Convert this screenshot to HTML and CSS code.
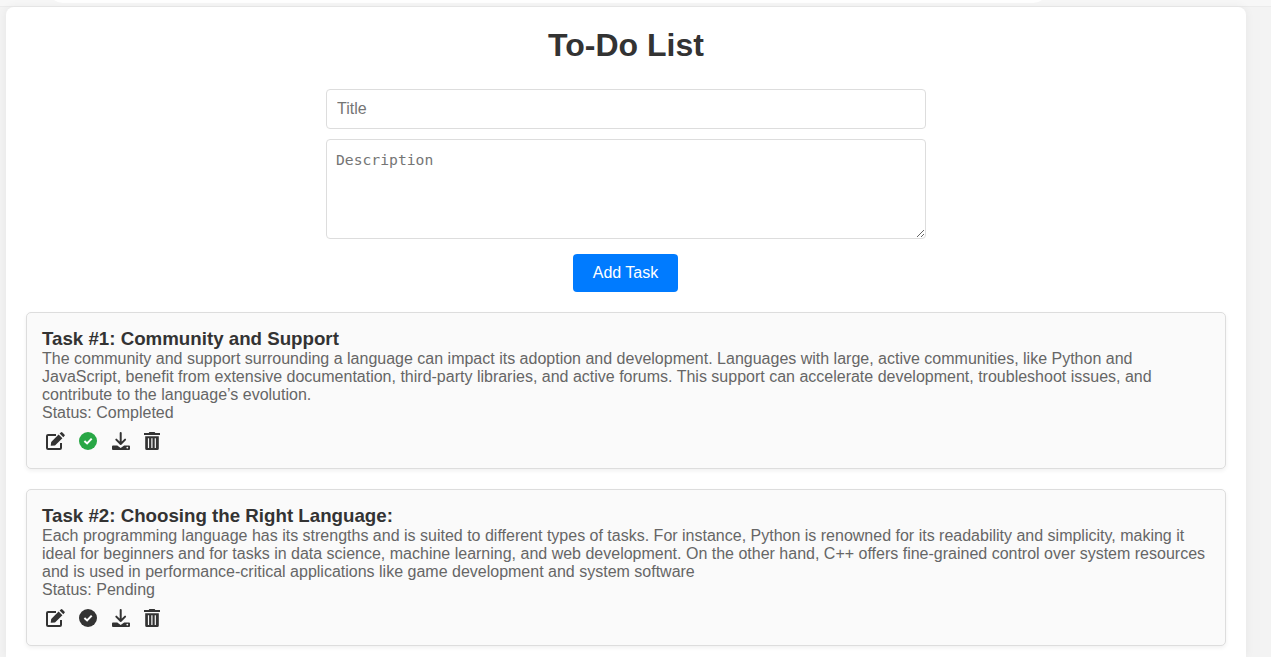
FILE: index.html
```
<!DOCTYPE html>
<html lang="en">
<head>
<meta charset="utf-8">
<title>To-Do List</title>
<link rel="stylesheet" href="styles.css">
</head>
<body>
<svg class="sprite" aria-hidden="true">
  <symbol id="edit" viewBox="0 0 19 18">
    <path d="M10 3H2.1Q1 3 1 4.1V15.9Q1 17 2.1 17H13.9Q15 17 15 15.9V11" fill="none" stroke="currentColor" stroke-width="2"/>
    <path d="M4.7 13.8 5.2 9.9 12.6 2.5 16.4 6.3 9 13.4ZM13.6 1.6 14.8.4Q15.6-.3 16.4.4L18.4 2.4Q19.2 3.2 18.4 4L17.3 5.2Z" fill="currentColor"/>
  </symbol>
  <symbol id="check" viewBox="0 0 18 18">
    <circle cx="9" cy="9" r="9" fill="currentColor"/>
    <path d="M5.4 8.9 8.1 11.4 12.7 6.6" fill="none" stroke="#fff" stroke-width="2"/>
  </symbol>
  <symbol id="download" viewBox="0 0 18 18">
    <path d="M8.7 1V12M4.3 7.6 8.7 12 13.1 7.6" fill="none" stroke="currentColor" stroke-width="2" stroke-linecap="round" stroke-linejoin="round"/>
    <path d="M1 13.5H5.3L8.7 16 12.1 13.5H17Q18 13.5 18 14.5V17Q18 18 17 18H1Q0 18 0 17V14.5Q0 13.5 1 13.5Z" fill="currentColor"/>
    <circle cx="15.3" cy="15.6" r=".9" fill="#fafafa"/>
  </symbol>
  <symbol id="trash" viewBox="0 0 16 18">
    <path d="M0 1H4.7L5.4 0H10.6L11.3 1H16V2.9H0ZM1.2 4.2H14.8V16.5Q14.8 18 13.3 18H2.7Q1.2 18 1.2 16.5Z" fill="currentColor"/>
    <path d="M4.5 6.2V16M7.9 6.2V16M11.3 6.2V16" stroke="#fafafa" stroke-width="1.2"/>
  </symbol>
</svg>
<div class="topbar"><div class="topbar-field"></div></div>
<main class="container">
  <h1>To-Do List</h1>
  <form class="task-form">
    <input class="field" type="text" placeholder="Title">
    <textarea class="field field-area" placeholder="Description"></textarea>
    <button class="add" type="button">Add Task</button>
  </form>
  <section class="tasks">
    <article class="task">
      <h3>Task #1: Community and Support</h3>
      <p>The community and support surrounding a language can impact its adoption and development. Languages with large, active communities, like Python and JavaScript, benefit from extensive documentation, third-party libraries, and active forums. This support can accelerate development, troubleshoot issues, and contribute to the language’s evolution.</p>
      <p>Status: Completed</p>
      <div class="actions">
        <svg class="icon icon-edit"><use href="#edit"/></svg>
        <svg class="icon icon-check done"><use href="#check"/></svg>
        <svg class="icon"><use href="#download"/></svg>
        <svg class="icon icon-trash"><use href="#trash"/></svg>
      </div>
    </article>
    <article class="task">
      <h3>Task #2: Choosing the Right Language:</h3>
      <p>Each programming language has its strengths and is suited to different types of tasks. For instance, Python is renowned for its readability and simplicity, making it ideal for beginners and for tasks in data science, machine learning, and web development. On the other hand, C++ offers fine-grained control over system resources and is used in performance-critical applications like game development and system software</p>
      <p>Status: Pending</p>
      <div class="actions">
        <svg class="icon icon-edit"><use href="#edit"/></svg>
        <svg class="icon icon-check"><use href="#check"/></svg>
        <svg class="icon"><use href="#download"/></svg>
        <svg class="icon icon-trash"><use href="#trash"/></svg>
      </div>
    </article>
  </section>
</main>
</body>
</html>
```
FILE: styles.css
```
* { box-sizing: border-box; margin: 0; }
html, body { height: 100%; overflow: hidden; }
body {
  background: #f3f3f3;
  color: #333;
  font-family: "Liberation Sans", Arial, sans-serif;
  font-size: 16px;
}
.sprite { display: none; }
.topbar {
  height: 7px;
  background: #f7f7f7;
  border-bottom: 1px solid #ebebeb;
  overflow: hidden;
}
.topbar-field {
  width: 1000px;
  height: 30px;
  margin: -27px 0 0 48px;
  border-radius: 15px;
  background: #fff;
}
.container {
  width: 1240px;
  height: 650px;
  margin-left: 6px;
  padding: 20px 20px 0;
  border-radius: 8px 8px 0 0;
  background: #fff;
  box-shadow: 0 0 10px rgba(0, 0, 0, .06);
}
h1 {
  font-size: 32px;
  line-height: 36px;
  text-align: center;
}
.task-form {
  display: flex;
  flex-direction: column;
  align-items: center;
  margin-top: 26px;
}
.field {
  width: 600px;
  height: 40px;
  padding: 10px;
  border: 1px solid #ddd;
  border-radius: 4px;
  background: #fff;
  font: 16px "Liberation Sans", Arial, sans-serif;
}
.field::placeholder { color: #757575; }
.field-area {
  height: 100px;
  margin-top: 10px;
  padding: 11px 9px;
  font: 14.7px/18px "DejaVu Sans Mono", monospace;
  resize: vertical;
}
.add {
  width: 105px;
  height: 38px;
  margin: 15px 1px 0 0;
  padding: 0;
  border: 0;
  border-radius: 4px;
  background: #007bff;
  color: #fff;
  font: 16px "Liberation Sans", Arial, sans-serif;
}
.tasks {
  display: flex;
  flex-direction: column;
  gap: 20px;
  margin-top: 20px;
}
.task {
  height: 157px;
  padding: 15px;
  border: 1px solid #ddd;
  border-radius: 5px;
  background: #fafafa;
  box-shadow: 0 2px 4px rgba(0, 0, 0, .06);
}
h3 {
  font-size: 18.72px;
  line-height: 22px;
}
p {
  color: #666;
  line-height: 18px;
}
.actions {
  display: flex;
  align-items: center;
  gap: 14px;
  margin: 10px 0 0 4px;
}
.icon { width: 18px; height: 18px; color: #333; }
.icon-edit { width: 19px; }
.icon-check { margin-right: 1px; }
.icon-trash { width: 16px; }
.done { color: #28a745; }
```
